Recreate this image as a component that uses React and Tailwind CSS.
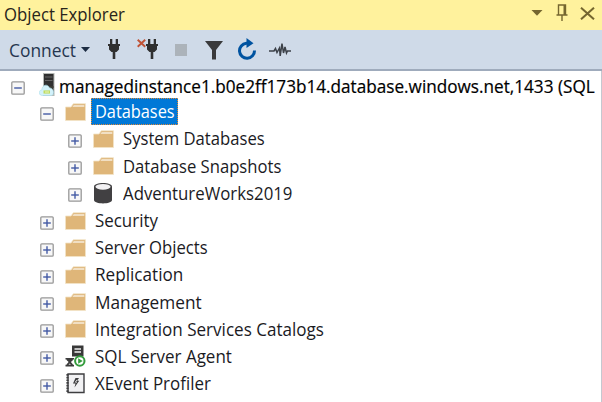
import React from 'react';

function Expander({ open }) {
  return (
    <svg className="mt-1 h-[14px] w-[14px] shrink-0" viewBox="0 0 14 14">
      <rect x="0.8" y="0.8" width="12.4" height="12.4" rx="1" fill="#f7f7f7" stroke="#989898" strokeWidth="1.3" />
      <path d="M3.2 7h7.6" stroke="#4259a4" strokeWidth="1.4" />
      {!open && <path d="M7 3.2v7.6" stroke="#4259a4" strokeWidth="1.4" />}
    </svg>
  );
}

function FolderIcon() {
  return (
    <svg className="h-[18px] w-[21px]" viewBox="0 0 21 18">
      <path d="M.5 4h5.500L8.300 .7H20.500v16.800H.5z" fill="#dfb679" stroke="#f3e3c8" strokeWidth=".8" />
      <path d="M8.800 2.200h10.500v1.500H7.400z" fill="#f7eddc" />
    </svg>
  );
}

function DatabaseIcon() {
  return (
    <svg className="h-[22px] w-[21px]" viewBox="0 0 21 22">
      <path d="M1 4.500C1-.2 19-.2 19 4.500V18c0 4.500-18 4.500-18 0z" fill="#414042" />
      <ellipse cx="10" cy="4.800" rx="7.600" ry="2.900" fill="#f2f1f3" />
    </svg>
  );
}

function ServerIcon() {
  return (
    <svg className="h-6 w-[17px]" viewBox="0 0 17 24">
      <path d="M4 0h11.500v23H4z" fill="#b5b8b5" />
      <path d="M5 1h9.500v14H5z" fill="#303030" />
      <path d="M6 4h7.500M6 7.500h7.500" stroke="#686868" strokeWidth="1" />
      <path d="M10 13h4.500v8H10z" fill="#3b3b36" />
      <path d="M3 22.500c-4-.5-3.500-5.500-.2-5.600C3 11.500 9 10.500 10.500 15c4.500-.5 5.500 7.500 1.500 7.500z" fill="#d3f2fa" stroke="#a9deeb" strokeWidth=".6" />
      <path d="M4.500 17.400h6.500v3.200h-6.500z" fill="#bfdc62" />
      <path d="M6 19h4" stroke="#edf7bd" strokeWidth="1" />
    </svg>
  );
}

function AgentIcon() {
  return (
    <svg className="h-[22px] w-[21px]" viewBox="0 0 21 22">
      <path d="M7 .5h11.500v11H7z" fill="#383838" />
      <path d="M9.500 4H16M9.500 7H16" stroke="#eee" strokeWidth="1.300" />
      <path d="M.5 12.900h8.500v1.500H8C7.800 16 6 16.300 6 17s1.800 1.500 2 2.800h1v1.700H.5v-1.700h1c.2-1.300 2-2 2-2.800s-1.800-1-2-2.600h-1z" fill="#3c3c3c" />
      <path d="m3.500 19.800 1.200-1.300L6 19.800z" fill="#ddd" />
      <circle cx="14.800" cy="16" r="4.700" fill="#fff" stroke="#349c3d" strokeWidth="2" />
      <path d="M13.200 13.300 17.700 16l-4.500 2.700z" fill="#349c3d" />
    </svg>
  );
}

function ProfilerIcon() {
  return (
    <svg className="h-[21px] w-[20px]" viewBox="0 0 20 21">
      <path d="M2 1h16v18.500H2z" fill="#f1f1f3" stroke="#3e3e40" strokeWidth="1.400" />
      <path d="M1.500 1v19" stroke="#3e3e40" strokeWidth="2.200" strokeDasharray="1.700 1" />
      <path d="M9.500 5H13l-1.800 2.800h2L8.500 14.500l1-4H7z" fill="#3c3c3e" />
      <path d="M11 6.800 9.300 9.200H11" stroke="#f1f1f3" fill="none" strokeWidth=".8" />
    </svg>
  );
}

const icons = { folder: FolderIcon, database: DatabaseIcon, agent: AgentIcon, profiler: ProfilerIcon };

const rows = [
  { label: 'Databases', icon: 'folder', open: true, selected: true, stretch: 'scale-x-[0.907]' },
  { label: 'System Databases', icon: 'folder', nested: true, stretch: 'scale-x-[0.926]' },
  { label: 'Database Snapshots', icon: 'folder', nested: true, stretch: 'scale-x-[0.925]' },
  { label: 'AdventureWorks2019', icon: 'database', nested: true, stretch: 'scale-x-[0.934]' },
  { label: 'Security', icon: 'folder', stretch: 'scale-x-[0.939]' },
  { label: 'Server Objects', icon: 'folder', stretch: 'scale-x-[0.925]' },
  { label: 'Replication', icon: 'folder', stretch: 'scale-x-[0.952]' },
  { label: 'Management', icon: 'folder', stretch: 'scale-x-[0.958]' },
  { label: 'Integration Services Catalogs', icon: 'folder', stretch: 'scale-x-[0.948]' },
  { label: 'SQL Server Agent', icon: 'agent', stretch: 'scale-x-[0.943]' },
  { label: 'XEvent Profiler', icon: 'profiler', stretch: 'scale-x-[0.940]' },
];

function TreeRow({ label, icon, open, selected, nested, stretch }) {
  const Icon = icons[icon];
  return (
    <div className={`flex h-[27.200px] shrink-0 items-center ${nested ? 'pl-[68px]' : 'pl-10'}`}>
      <Expander open={open} />
      <div className="ml-[11px] flex w-[21px] shrink-0 justify-center">
        <Icon />
      </div>
      <span
        className={`ml-[5px] flex h-[27px] items-center whitespace-nowrap border pl-[2.500px] text-[18px] ${
          selected ? 'w-[87px] border-dotted border-[#e08a38] bg-[#0078d7] text-white' : 'border-transparent text-[#1b1b1f]'
        }`}
      >
        <span className={`origin-left ${stretch}`}>{label}</span>
      </span>
    </div>
  );
}

function Plug() {
  return <path d="M3 0h2.300v5H3zM8.700 0H11v5H8.700zM1 5h12v2h-1v3.500L9.500 13H8.300v7H5.700v-7H4.500L2 10.500V7H1z" fill="#303030" />;
}

export default function App() {
  return (
    <div className="flex h-[402px] w-[602px] flex-col overflow-hidden bg-white font-['Open_Sans','Noto_Sans',sans-serif]">
      <header className="flex h-[30px] shrink-0 items-center bg-[#fff29d] pl-1 pr-[7px]">
        <h1 className="origin-left scale-x-[0.93] whitespace-nowrap pb-[2px] text-[18px] leading-[28px] text-[#29251b]">Object Explorer</h1>
        <div className="ml-auto flex items-center pb-1">
          <svg className="h-[6px] w-3" viewBox="0 0 12 6"><path d="M.5 0h11L6 5.800z" fill="#75662f" /></svg>
          <svg className="ml-[13px] h-[18px] w-3" viewBox="0 0 12 18">
            <path d="M2.500 11V1h7v10M.5 11h11M6 11v6" fill="none" stroke="#75662f" strokeWidth="1.400" />
            <path d="M7.500 1h2v10h-2z" fill="#75662f" />
          </svg>
          <svg className="ml-3 h-[13px] w-[15px]" viewBox="0 0 15 13"><path d="m1 .7 13 11.600M14 .7 1 12.300" stroke="#75662f" strokeWidth="2" /></svg>
        </div>
      </header>
      <div className="flex h-[41px] shrink-0 items-center border-b-2 border-[#9fabbc] bg-[#cfdae8] pl-[9px]">
        <span className="w-[69px] origin-left scale-x-[0.965] whitespace-nowrap pt-px text-[18px] text-[#26364f]">Connect</span>
        <svg className="ml-[3px] h-[5px] w-[9px]" viewBox="0 0 9 5"><path d="M0 0h9L4.500 5z" fill="#1c2c43" /></svg>
        <svg className="ml-[17px] h-[21px] w-[14px]" viewBox="0 0 14 21"><Plug /></svg>
        <svg className="ml-4 h-[21px] w-[22px]" viewBox="0 0 22 21">
          <g transform="translate(8 0)"><Plug /></g>
          <path d="m.7 .7 7.500 7M8.200 .7l-7.500 7" stroke="#c05235" strokeWidth="1.900" />
        </svg>
        <div className="ml-4 h-3 w-3 bg-[#acb3ba]" />
        <svg className="ml-[18px] mt-[2px] h-5 w-[18px]" viewBox="0 0 18 20"><path d="M0 0h18l-7 9v9.500H7V9z" fill="#3a3a3c" /></svg>
        <svg className="ml-[14px] h-[23px] w-5" viewBox="0 0 20 23">
          <path d="M11 5.300H9.300A7.500 7.500 0 1 0 17.500 12.500" fill="none" stroke="#0053a0" strokeWidth="3" />
          <path d="M9.500 0 16.500 5.200 9.500 10z" fill="#0053a0" />
        </svg>
        <svg className="ml-3 h-4 w-[22px]" viewBox="0 0 22 16">
          <path d="M0 9h5l1.500-2.500 1.500 4L10.500 6l.7 8L13 1.500l1.500 9.500L16 5l1.500 6 1-2H22" fill="none" stroke="#3c4148" strokeWidth="1.500" />
        </svg>
      </div>
      <main className="flex min-h-0 flex-1 flex-col border-r border-[#c5c8d0]">
        <div className="flex h-[27.200px] shrink-0 items-center pl-[11px] pt-[3px]">
          <Expander open />
          <div className="ml-[14px] pb-[3px]"><ServerIcon /></div>
          <span className="ml-[3px] origin-left scale-x-[0.953] whitespace-nowrap text-[18px] text-black [-webkit-text-stroke:0.2px_black]">
            managedinstance1.b0e2ff173b14.database.windows.net,1433 (SQL
          </span>
        </div>
        {rows.map((row) => <TreeRow key={row.label} {...row} />)}
      </main>
    </div>
  );
}
